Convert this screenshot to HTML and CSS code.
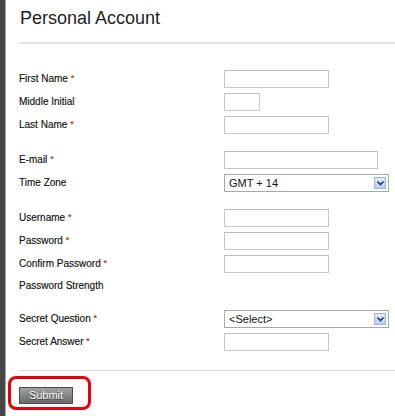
FILE: index.html
```html
<!DOCTYPE html>
<html>
<head>
<meta charset="utf-8">
<title>Personal Account</title>
<link rel="stylesheet" href="styles.css">
</head>
<body>
<div class="frame">
  <div class="sidebar"></div>
  <div class="page">
    <h1 class="title">Personal Account</h1>
    <div class="rule"></div>
    <form class="form">
      <div class="group">
        <div class="row"><label class="label">First Name <span class="req">*</span></label><input class="field w-md" type="text"></div>
        <div class="row"><label class="label">Middle Initial</label><input class="field w-sm" type="text"></div>
        <div class="row"><label class="label">Last Name <span class="req">*</span></label><input class="field w-md" type="text"></div>
      </div>
      <div class="group">
        <div class="row"><label class="label">E-mail <span class="req">*</span></label><input class="field w-lg" type="text"></div>
        <div class="row"><label class="label">Time Zone</label>
          <div class="select w-xl"><span class="select-text">GMT + 14</span><span class="select-btn"><svg width="9" height="10" viewBox="0 0 9 10"><path d="M1.5 3.5 L4.5 6.5 L7.5 3.5" fill="none" stroke="#1f3470" stroke-width="1.6"/></svg></span></div>
        </div>
      </div>
      <div class="group">
        <div class="row"><label class="label">Username <span class="req">*</span></label><input class="field w-md" type="text"></div>
        <div class="row"><label class="label">Password <span class="req">*</span></label><input class="field w-md" type="password"></div>
        <div class="row"><label class="label">Confirm Password <span class="req">*</span></label><input class="field w-md" type="password"></div>
        <div class="row row-short"><label class="label">Password Strength</label></div>
      </div>
      <div class="group">
        <div class="row"><label class="label">Secret Question <span class="req">*</span></label>
          <div class="select w-xl"><span class="select-text">&lt;Select&gt;</span><span class="select-btn"><svg width="9" height="10" viewBox="0 0 9 10"><path d="M1.5 3.5 L4.5 6.5 L7.5 3.5" fill="none" stroke="#1f3470" stroke-width="1.6"/></svg></span></div>
        </div>
        <div class="row"><label class="label">Secret Answer <span class="req">*</span></label><input class="field w-md" type="text"></div>
      </div>
      <div class="rule-thin"></div>
      <div class="actions">
        <button class="submit" type="button">Submit</button>
        <div class="highlight"></div>
      </div>
    </form>
  </div>
</div>
</body>
</html>
```
FILE: styles.css
```css
html, body {
  margin: 0;
  padding: 0;
  background: #ffffff;
}
body {
  font-family: "Liberation Sans", Arial, sans-serif;
  color: #111111;
}
.frame {
  display: flex;
  min-height: 416px;
}
.sidebar {
  width: 5px;
  background: #474747;
  border-right: 1px solid #a8a8a8;
  flex: none;
}
.page {
  flex: 1;
  padding-left: 13px;
}
.title {
  margin: 0;
  padding-top: 8px;
  font-size: 18px;
  line-height: 20px;
  font-weight: normal;
  color: #222222;
  padding-left: 1px;
}
.rule {
  margin-top: 14px;
  height: 2px;
  background: #e3e3e3;
}
.form {
  margin: 24px 0 0 0;
}
.group {
  margin-bottom: 12px;
}
.group:last-of-type {
  margin-bottom: 0;
}
.row {
  display: grid;
  grid-template-columns: 205px auto;
  height: 23px;
  align-items: start;
}
.row-short {
  height: 20px;
}
.label {
  font-size: 10px;
  line-height: 22px;
  color: #111111;
  -webkit-text-stroke: 0.15px #111111;
}
.row-short .label {
  line-height: 20px;
}
.req {
  color: #a8321a;
  font-size: 9px;
  line-height: 9px;
  vertical-align: 1px;
  -webkit-text-stroke: 0.15px #a8321a;
}
.field {
  box-sizing: border-box;
  height: 18px;
  margin: 2px 0 0 0;
  padding: 0 3px;
  border: 1px solid #c8c8c8;
  border-top-color: #bdbdbd;
  background: #ffffff;
  font-family: "Liberation Sans", Arial, sans-serif;
  font-size: 11px;
  outline: none;
}
.w-sm { width: 36px; }
.w-md { width: 105px; }
.w-lg { width: 154px; }
.w-xl { width: 165px; }
.select {
  box-sizing: border-box;
  height: 18px;
  margin-top: 2px;
  border: 1px solid #a9a9a9;
  display: flex;
  align-items: center;
  padding-left: 4px;
  padding-right: 2px;
  background: #ffffff;
}
.select-text {
  flex: 1;
  font-size: 11px;
  color: #111111;
}
.select-btn {
  box-sizing: border-box;
  width: 12px;
  height: 12px;
  border: 1px solid #9cb4de;
  background: linear-gradient(#e1ebfb, #b8cef2);
  display: flex;
  align-items: center;
  justify-content: center;
}
.rule-thin {
  margin-top: 16px;
  height: 1px;
  background: #dcdcdc;
}
.actions {
  position: relative;
  padding-top: 16px;
}
.submit {
  box-sizing: border-box;
  width: 54px;
  height: 17px;
  margin: 0;
  padding: 0;
  border: 1px solid #4e4e4e;
  background: linear-gradient(#a2a2a2, #6a6a6a);
  color: #ffffff;
  font-family: "Liberation Sans", Arial, sans-serif;
  font-size: 11px;
  line-height: 15px;
  text-shadow: 0 1px 1px #333333;
  display: block;
}
.highlight {
  position: absolute;
  left: -11px;
  top: 5px;
  width: 83px;
  height: 34px;
  box-sizing: border-box;
  border: 3px solid #e8000b;
  border-radius: 8px;
}
```
